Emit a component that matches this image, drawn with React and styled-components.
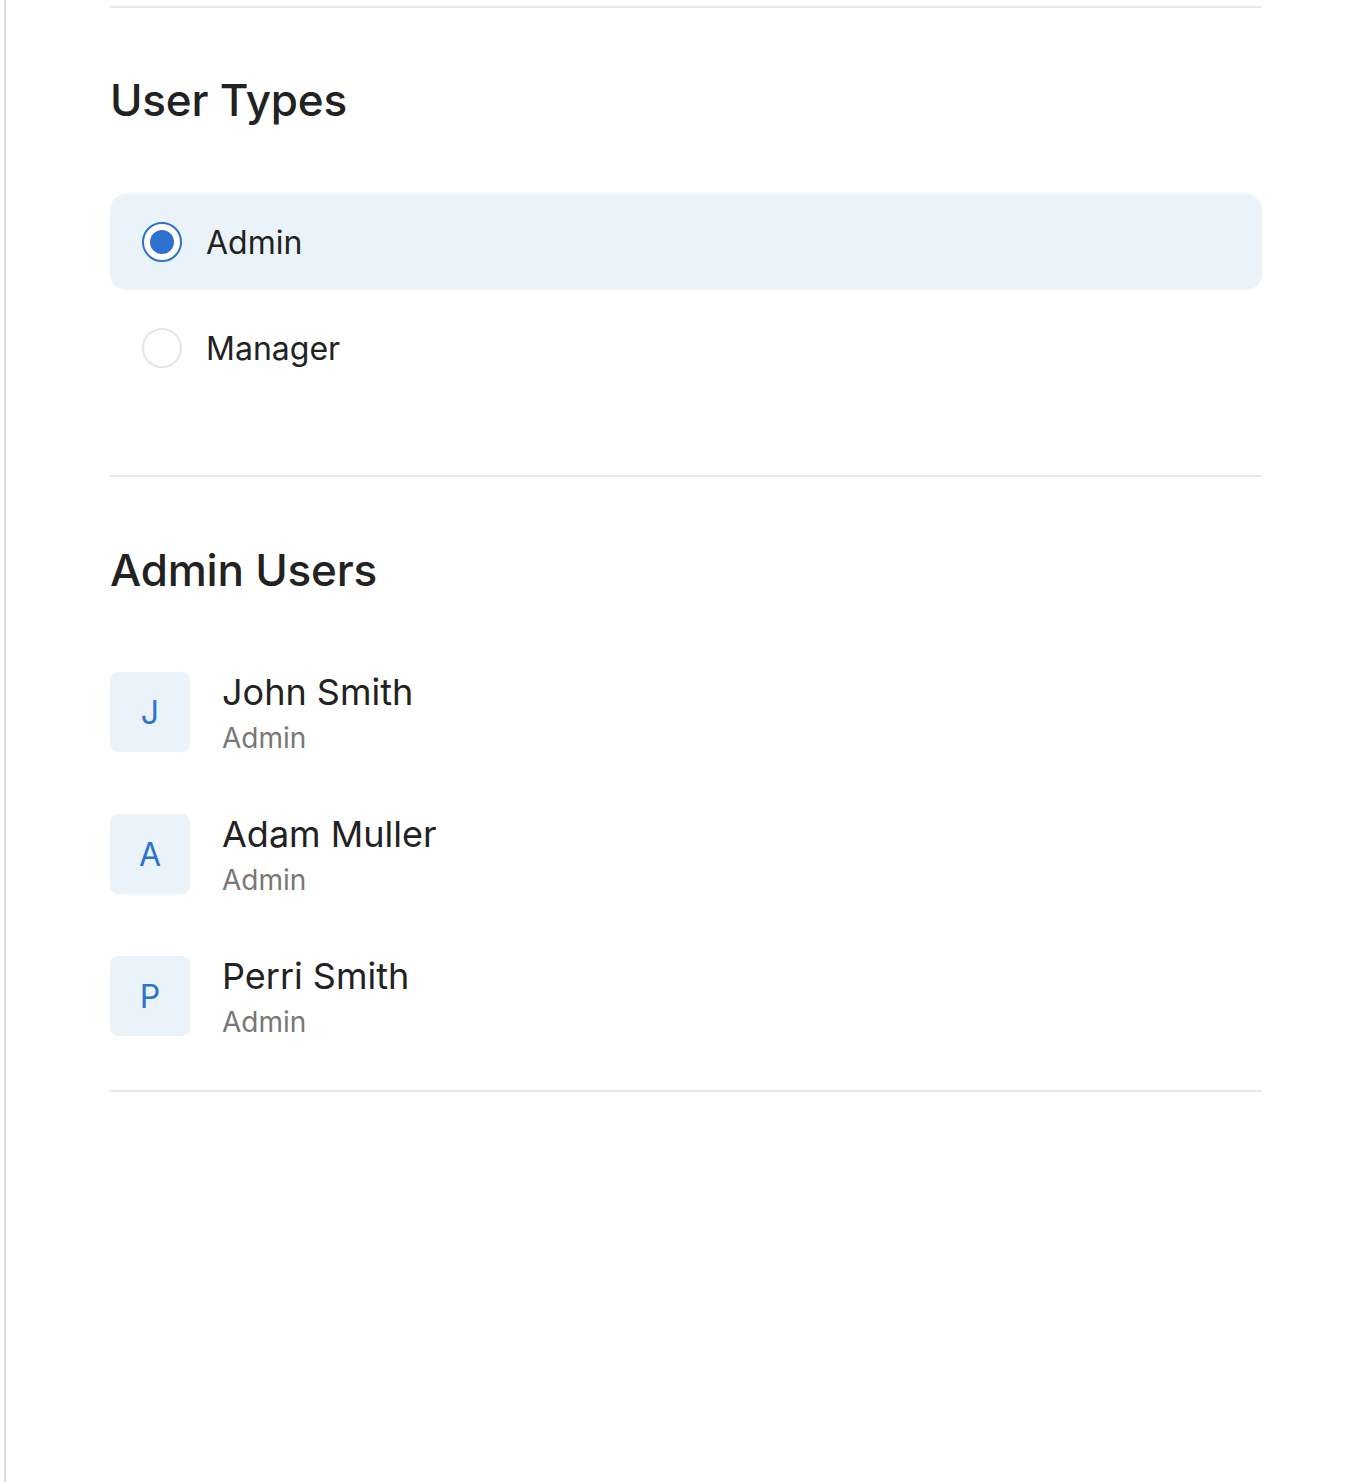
import React from "react";
import styled, { createGlobalStyle } from "styled-components";

const Global = createGlobalStyle`
  html, body { margin: 0; padding: 0; background: #fff; }
  body { font-family: Inter, "Noto Sans", sans-serif; color: #222; }
`;

const Page = styled.div`
  margin-left: 4px;
  border-left: 2px solid #dcdcdc;
  min-height: 1480px;
  padding: 6px 102px 0 104px;
`;

const Divider = styled.hr`
  margin: 0;
  border: 0;
  height: 2px;
  background: #e5e9ee;
`;

const Section = styled.section`
  padding: ${(p) => p.$pad};
`;

const Heading = styled.h2`
  margin: 0;
  font-size: 44px;
  font-weight: 500;
  line-height: 56px;
  color: #222;
  letter-spacing: -0.2px;
`;

const OptionList = styled.div`
  display: flex;
  flex-direction: column;
  gap: 10px;
  margin-top: 66px;
`;

const Option = styled.label`
  display: flex;
  align-items: center;
  gap: 24px;
  height: 96px;
  padding: 0 32px;
  border-radius: 16px;
  background: ${(p) => (p.$checked ? "#eaf2fa" : "transparent")};
  cursor: pointer;
`;

const Radio = styled.span`
  box-sizing: border-box;
  width: 40px;
  height: 40px;
  border-radius: 50%;
  border: 2px solid ${(p) => (p.$checked ? "#2d72cf" : "#e1e5ec")};
  background: #fff;
  display: flex;
  align-items: center;
  justify-content: center;
  &::after {
    content: "";
    width: 24px;
    height: 24px;
    border-radius: 50%;
    background: ${(p) => (p.$checked ? "#2d72cf" : "transparent")};
  }
`;

const OptionText = styled.span`
  font-size: 32px;
  color: #222;
`;

const UserList = styled.div`
  display: flex;
  flex-direction: column;
  gap: 62px;
  margin-top: 74px;
`;

const UserRow = styled.div`
  display: flex;
  align-items: flex-start;
  gap: 32px;
`;

const Avatar = styled.div`
  width: 80px;
  height: 80px;
  border-radius: 8px;
  background: #eaf2fa;
  color: #2d72cf;
  font-size: 32px;
  display: flex;
  align-items: center;
  justify-content: center;
  flex-shrink: 0;
`;

const UserInfo = styled.div`
  display: flex;
  flex-direction: column;
  height: 80px;
`;

const Name = styled.div`
  font-size: 36px;
  line-height: 40px;
  color: #222;
`;

const Role = styled.div`
  margin-top: 12px;
  font-size: 28px;
  line-height: 28px;
  color: #777;
`;

const users = [
  { name: "John Smith", role: "Admin" },
  { name: "Adam Muller", role: "Admin" },
  { name: "Perri Smith", role: "Admin" },
];

export default function App() {
  return (
    <>
      <Global />
      <Page>
        <Divider />
        <Section $pad="64px 0 79px">
          <Heading>User Types</Heading>
          <OptionList>
            <Option $checked>
              <Radio $checked />
              <OptionText>Admin</OptionText>
            </Option>
            <Option>
              <Radio />
              <OptionText>Manager</OptionText>
            </Option>
          </OptionList>
        </Section>
        <Divider />
        <Section $pad="65px 0 54px">
          <Heading>Admin Users</Heading>
          <UserList>
            {users.map((u) => (
              <UserRow key={u.name}>
                <Avatar>{u.name[0]}</Avatar>
                <UserInfo>
                  <Name>{u.name}</Name>
                  <Role>{u.role}</Role>
                </UserInfo>
              </UserRow>
            ))}
          </UserList>
        </Section>
        <Divider />
      </Page>
    </>
  );
}
